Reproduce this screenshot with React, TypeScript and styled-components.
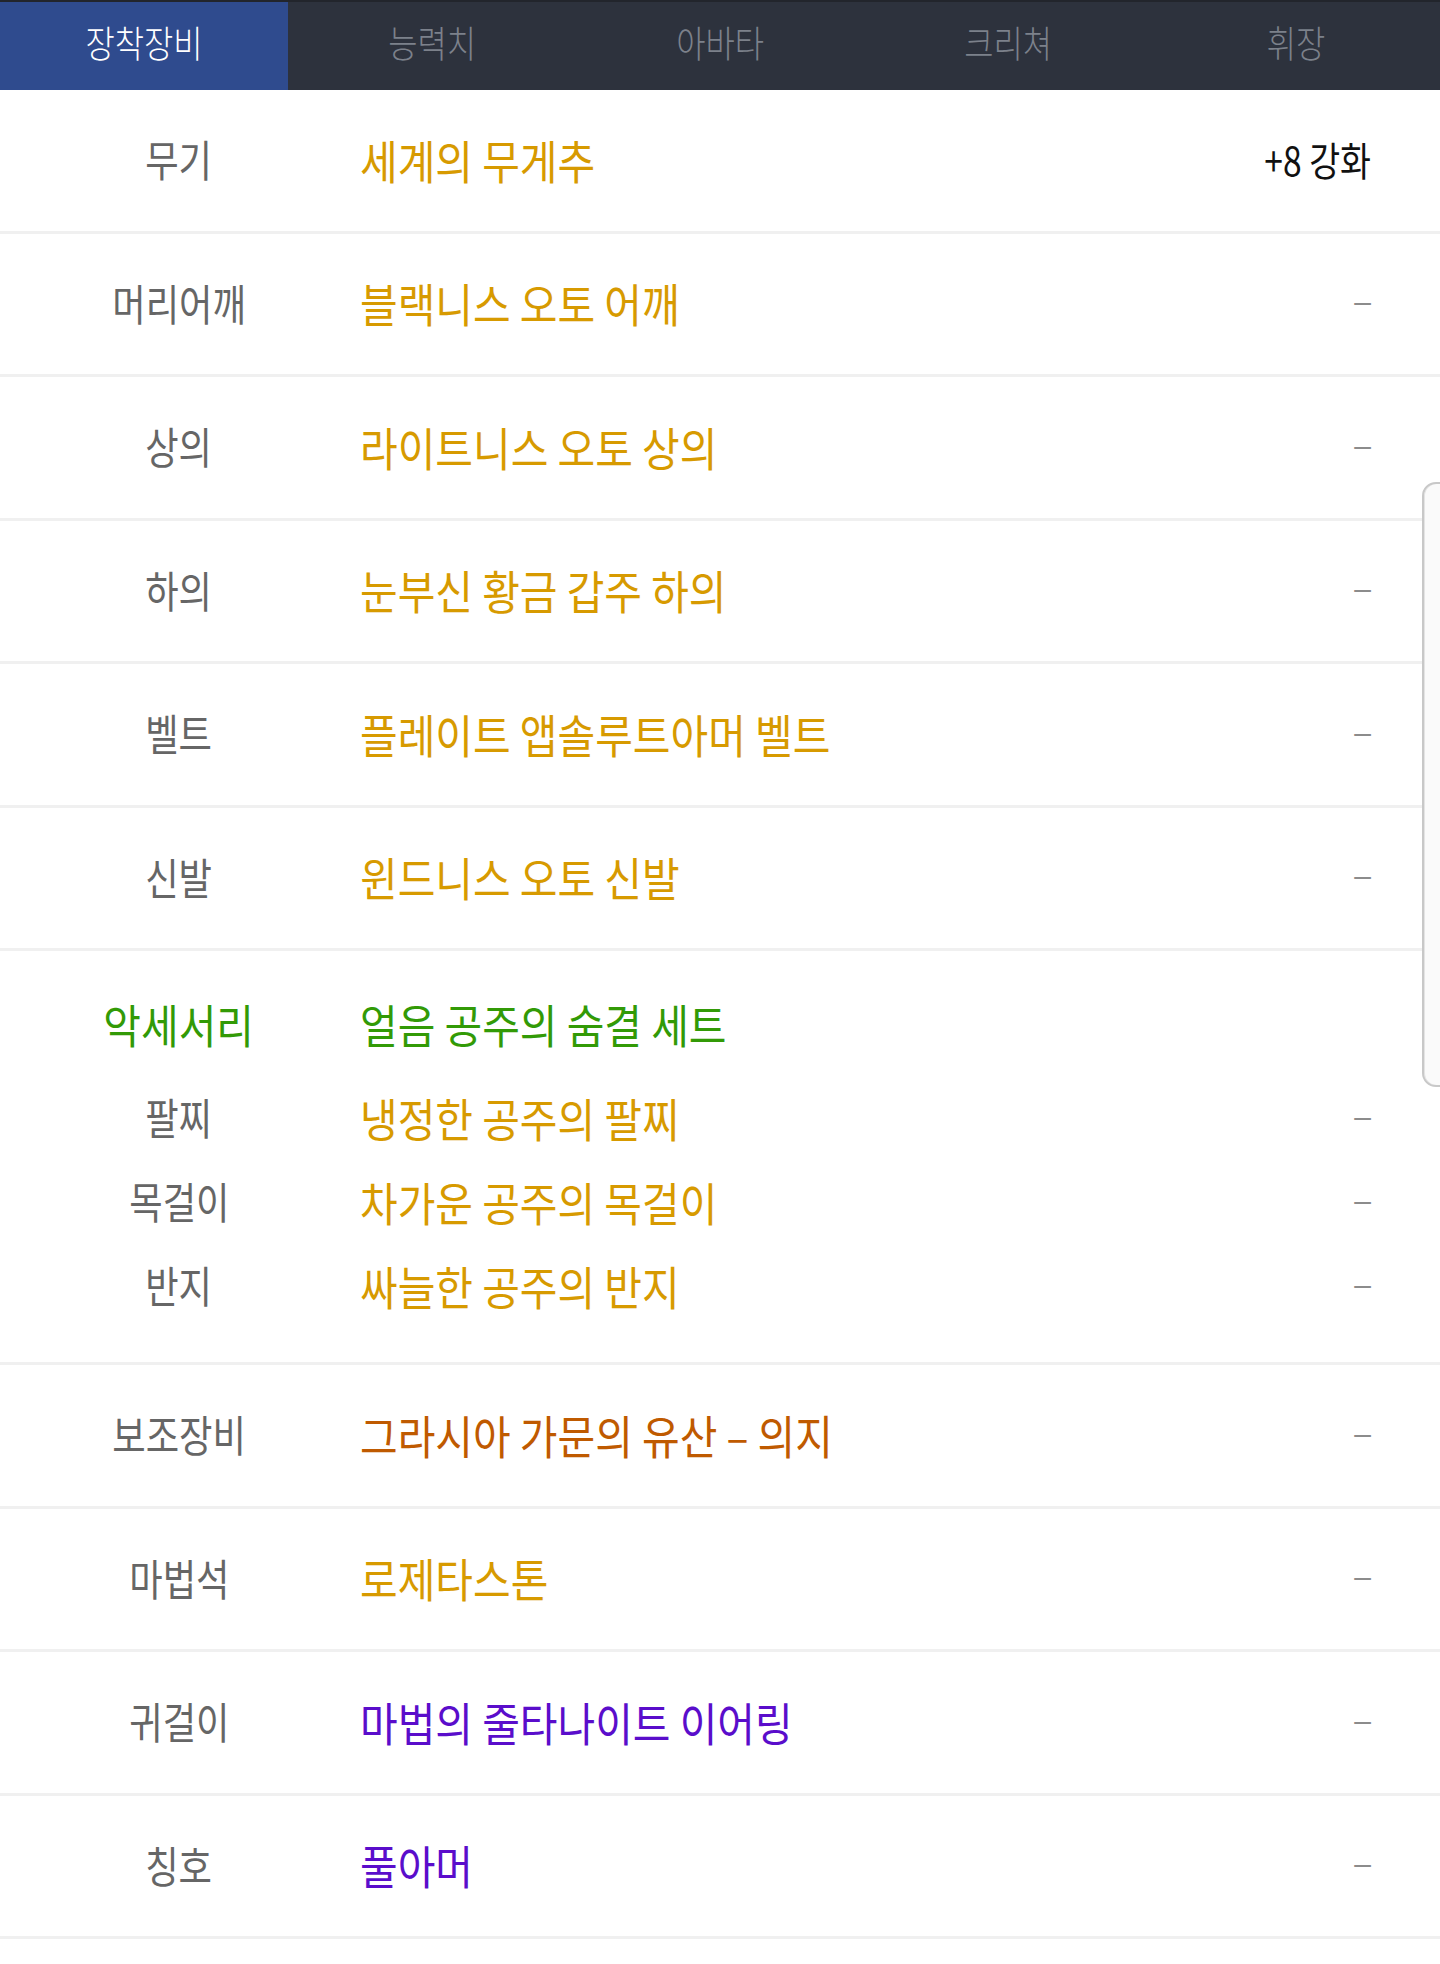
import styled, { createGlobalStyle } from "styled-components";

const GlobalStyle = createGlobalStyle`
  html, body {
    margin: 0;
    padding: 0;
    background: #fff;
  }
  body {
    font-family: "Noto Sans CJK KR", "Noto Sans", sans-serif;
  }
`;

const Page = styled.div`
  width: 100%;
  background: #fff;
`;

const TabBar = styled.nav`
  display: grid;
  grid-template-columns: repeat(5, 1fr);
  height: 88px;
  border-top: 2px solid #22252c;
  background: #2d323d;
`;

const Tab = styled.div<{ $active?: boolean }>`
  display: flex;
  align-items: center;
  justify-content: center;
  padding-bottom: 7px;
  background: ${({ $active }) => ($active ? "#2f4b8e" : "transparent")};
  color: ${({ $active }) => ($active ? "#ffffff" : "#7c818b")};
  font-size: 37px;
  font-weight: 300;
  line-height: 1;
`;

// the phone font is narrower than Noto, so squeeze the glyphs a little
const Narrow = styled.span<{ $origin?: string; $scale?: number }>`
  display: inline-block;
  white-space: nowrap;
  transform: scaleX(${({ $scale }) => $scale ?? 0.86});
  transform-origin: ${({ $origin }) => $origin ?? "center"};
`;

const Row = styled.div`
  display: grid;
  grid-template-columns: 358px 1fr auto;
  column-gap: 2px;
  align-items: center;
  height: 137.5px;
  padding: 0 69px 3px 0;
  border-bottom: 3px solid #f0f0f0;
`;

const Group = styled.div`
  display: flex;
  flex-direction: column;
  padding: 31px 69px 34px 0;
  border-bottom: 3px solid #f0f0f0;
`;

const SubRow = styled.div<{ $head?: boolean }>`
  display: grid;
  grid-template-columns: 358px 1fr auto;
  column-gap: 2px;
  align-items: center;
  box-sizing: border-box;
  height: 84px;
  padding-bottom: 3px;
  margin-bottom: ${({ $head }) => ($head ? "10px" : "0")};
`;

const Label = styled.div<{ $color?: string; $big?: boolean }>`
  text-align: center;
  color: ${({ $color }) => $color ?? "#666666"};
  font-size: ${({ $big }) => ($big ? "46px" : "43px")};
  line-height: 1;
`;

const ItemName = styled.div<{ $color: string }>`
  color: ${({ $color }) => $color};
  font-size: 46px;
  line-height: 1;
`;

const Value = styled.div`
  color: #111;
  font-size: 40px;
  line-height: 1;
  text-align: right;
`;

const Dash = styled.div`
  color: #8c8c8c;
  font-family: "Liberation Sans", Arial, sans-serif;
  font-size: 30px;
  line-height: 1;
  text-align: right;
`;

const ScrollThumb = styled.div`
  position: fixed;
  top: 482px;
  right: -20px;
  width: 38px;
  height: 605px;
  box-sizing: border-box;
  border: 2px solid #c8c8c8;
  border-radius: 14px;
  background: #fafafa;
  box-shadow: inset 1px 0 0 #e4e4e4;
`;

const GOLD = "#d79a00";
const GREEN = "#329a06";
const BROWN = "#bf5a00";
const PURPLE = "#5a0dcb";

const LABEL_SCALE = 0.845;
const ITEM_SCALE = 0.89;

type Item = { slot: string; name: string; color: string; extra?: string };

const topItems: Item[] = [
  { slot: "무기", name: "세계의 무게추", color: GOLD, extra: "+8 강화" },
  { slot: "머리어깨", name: "블랙니스 오토 어깨", color: GOLD },
  { slot: "상의", name: "라이트니스 오토 상의", color: GOLD },
  { slot: "하의", name: "눈부신 황금 갑주 하의", color: GOLD },
  { slot: "벨트", name: "플레이트 앱솔루트아머 벨트", color: GOLD },
  { slot: "신발", name: "윈드니스 오토 신발", color: GOLD },
];

const accessories: Item[] = [
  { slot: "팔찌", name: "냉정한 공주의 팔찌", color: GOLD },
  { slot: "목걸이", name: "차가운 공주의 목걸이", color: GOLD },
  { slot: "반지", name: "싸늘한 공주의 반지", color: GOLD },
];

const bottomItems: Item[] = [
  { slot: "보조장비", name: "그라시아 가문의 유산 – 의지", color: BROWN },
  { slot: "마법석", name: "로제타스톤", color: GOLD },
  { slot: "귀걸이", name: "마법의 줄타나이트 이어링", color: PURPLE },
  { slot: "칭호", name: "풀아머", color: PURPLE },
];

const tabs = ["장착장비", "능력치", "아바타", "크리쳐", "휘장"];

const Extra = ({ text }: { text?: string }) =>
  text ? (
    <Value>
      <Narrow $origin="right" $scale={0.84}>
        {text}
      </Narrow>
    </Value>
  ) : (
    <Dash>–</Dash>
  );

const EquipRow = ({ item }: { item: Item }) => (
  <Row>
    <Label>
      <Narrow $scale={LABEL_SCALE}>{item.slot}</Narrow>
    </Label>
    <ItemName $color={item.color}>
      <Narrow $origin="left" $scale={ITEM_SCALE}>
        {item.name}
      </Narrow>
    </ItemName>
    <Extra text={item.extra} />
  </Row>
);

export default function App() {
  return (
    <Page>
      <GlobalStyle />
      <TabBar>
        {tabs.map((t, i) => (
          <Tab key={t} $active={i === 0}>
            <Narrow $scale={0.86}>{t}</Narrow>
          </Tab>
        ))}
      </TabBar>

      {topItems.map((item) => (
        <EquipRow key={item.slot} item={item} />
      ))}

      <Group>
        <SubRow $head>
          <Label $color={GREEN} $big>
            <Narrow $scale={ITEM_SCALE}>악세서리</Narrow>
          </Label>
          <ItemName $color={GREEN}>
            <Narrow $origin="left" $scale={ITEM_SCALE}>
              얼음 공주의 숨결 세트
            </Narrow>
          </ItemName>
          <span />
        </SubRow>
        {accessories.map((item) => (
          <SubRow key={item.slot}>
            <Label>
              <Narrow $scale={LABEL_SCALE}>{item.slot}</Narrow>
            </Label>
            <ItemName $color={item.color}>
              <Narrow $origin="left" $scale={ITEM_SCALE}>
                {item.name}
              </Narrow>
            </ItemName>
            <Dash>–</Dash>
          </SubRow>
        ))}
      </Group>

      {bottomItems.map((item) => (
        <EquipRow key={item.slot} item={item} />
      ))}

      <ScrollThumb />
    </Page>
  );
}
